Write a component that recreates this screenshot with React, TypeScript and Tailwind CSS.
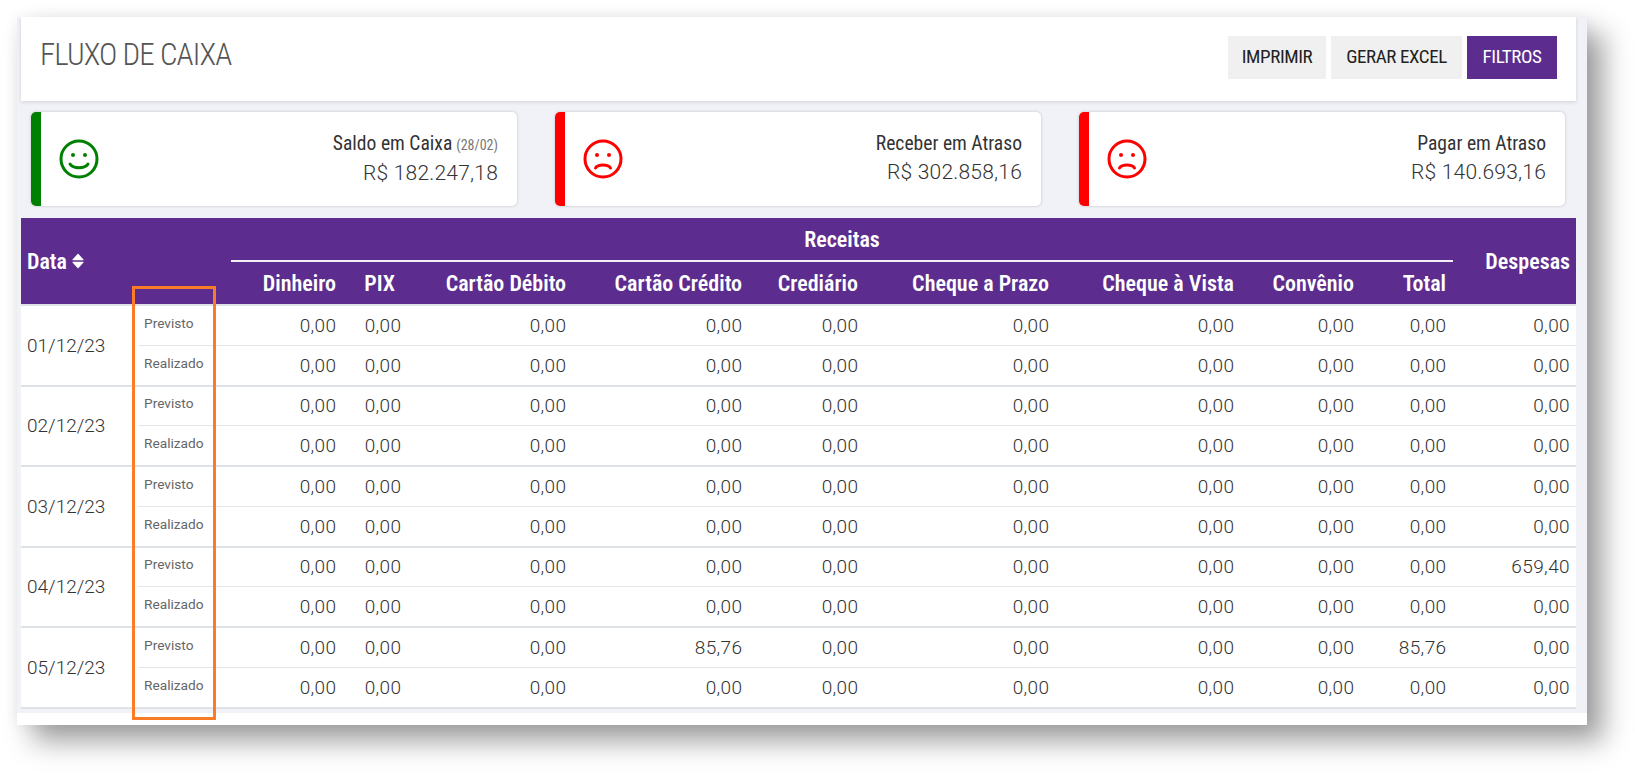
const colHeads = [
  "Dinheiro",
  "PIX",
  "Cartão Débito",
  "Cartão Crédito",
  "Crediário",
  "Cheque a Prazo",
  "Cheque à Vista",
  "Convênio",
  "Total",
];

const zero = ["0,00", "0,00", "0,00", "0,00", "0,00", "0,00", "0,00", "0,00", "0,00", "0,00"];

const days = [
  { date: "01/12/23", previsto: zero, realizado: zero },
  { date: "02/12/23", previsto: zero, realizado: zero },
  { date: "03/12/23", previsto: zero, realizado: zero },
  {
    date: "04/12/23",
    previsto: ["0,00", "0,00", "0,00", "0,00", "0,00", "0,00", "0,00", "0,00", "0,00", "659,40"],
    realizado: zero,
  },
  {
    date: "05/12/23",
    previsto: ["0,00", "0,00", "0,00", "85,76", "0,00", "0,00", "0,00", "0,00", "85,76", "0,00"],
    realizado: zero,
  },
];

const cards = [
  { label: "Saldo em Caixa", note: "(28/02)", value: "R$ 182.247,18", good: true },
  { label: "Receber em Atraso", note: "", value: "R$ 302.858,16", good: false },
  { label: "Pagar em Atraso", note: "", value: "R$ 140.693,16", good: false },
];

function Face({ good }: { good: boolean }) {
  const color = good ? "#008000" : "#ff0000";
  return (
    <svg width="40" height="42" viewBox="0 0 40 42" fill="none">
      <circle cx="20" cy="21" r="18" stroke={color} strokeWidth="3" />
      <circle cx="14" cy="17" r="2" fill={color} />
      <circle cx="26" cy="17" r="2" fill={color} />
      {good ? (
        <path d="M11 26 C14 31 26 31 29 26" stroke={color} strokeWidth="3" strokeLinecap="round" />
      ) : (
        <path d="M12.5 30 C15 26 25 26 27.5 30" stroke={color} strokeWidth="3" strokeLinecap="round" />
      )}
    </svg>
  );
}

function SortIcon() {
  return (
    <svg width="12" height="16" viewBox="0 0 12 16" fill="white">
      <path d="M6 0.5 L11.5 6.5 a0.5 0.5 0 0 1 -0.4 0.8 H0.9 a0.5 0.5 0 0 1 -0.4 -0.8 Z" />
      <path d="M6 15.5 L11.5 9.5 a0.5 0.5 0 0 0 -0.4 -0.8 H0.9 a0.5 0.5 0 0 0 -0.4 0.8 Z" />
    </svg>
  );
}

function ValueCells({ values, thick }: { values: string[]; thick: boolean }) {
  return (
    <>
      {values.map((v, i) => (
        <td
          key={i}
          className={
            thick
              ? "border-b-2 border-[#dee2e6] pr-[6.5px] pt-[1px] text-right text-[19px] font-light tracking-[0.4px] text-[#333] last:pr-[6px]"
              : "border-b border-[#e4e6e9] pr-[6.5px] pt-[1px] text-right text-[19px] font-light tracking-[0.4px] text-[#333] last:pr-[6px]"
          }
        >
          {v}
        </td>
      ))}
    </>
  );
}

export default function App() {
  return (
    <div className="h-[774px] w-[1635px] overflow-hidden bg-white pl-[17px] pt-[17px] font-[Roboto,sans-serif]">
      <div className="relative h-[708px] w-[1570px] bg-white shadow-[16px_16px_26px_rgba(0,0,0,0.38),0_0_14px_rgba(0,0,0,0.06)]">
        <div className="h-[696px] overflow-hidden bg-[#f0f2f7] pl-[4px] pr-[11px]">
          <div className="flex h-[84px] items-center justify-between bg-white pl-[19px] pr-[19px] shadow-[0_1px_4px_rgba(0,0,0,0.14)]">
            <h1 className="-mt-[8px] text-[31px] font-light tracking-[-0.9px] text-[#555] [font-stretch:75%]">
              FLUXO DE CAIXA
            </h1>
            <div className="-mt-[4px] flex gap-[5px] text-[19px] tracking-[-0.4px] [font-stretch:75%]">
              <button className="h-[43px] w-[98px] bg-[#f0f0f0] text-[#222]">IMPRIMIR</button>
              <button className="h-[43px] w-[131px] bg-[#f0f0f0] text-[#222]">GERAR EXCEL</button>
              <button className="h-[43px] w-[90px] bg-[#5c2d8e] text-white">FILTROS</button>
            </div>
          </div>

          <div className="ml-[10px] mr-[11px] mt-[11px] grid h-[94px] grid-cols-3 gap-[38px]">
            {cards.map((c) => (
              <div
                key={c.label}
                className="flex items-center overflow-hidden rounded-[5px] bg-white shadow-[0_0_3px_rgba(0,0,0,0.22)]"
              >
                <div className={c.good ? "h-full w-[10px] bg-[#008000]" : "h-full w-[10px] bg-[#ff0000]"} />
                <div className="ml-[18px]">
                  <Face good={c.good} />
                </div>
                <div className="mb-[2px] ml-auto pr-[19px] text-right text-[#333]">
                  <div className="text-[19.6px] leading-[28px] [font-stretch:75%]">
                    {c.label}
                    {c.note && <span className="ml-[4px] text-[14px] text-[#777]">{c.note}</span>}
                  </div>
                  <div className="text-[21px] font-light leading-[28px] tracking-[0.2px]">{c.value}</div>
                </div>
              </div>
            ))}
          </div>

          <table className="mt-[12px] w-[1555px] table-fixed border-separate border-spacing-0 bg-white">
            <colgroup>
              <col className="w-[117px]" />
              <col className="w-[93px]" />
              <col className="w-[112px]" />
              <col className="w-[65px]" />
              <col className="w-[165px]" />
              <col className="w-[176px]" />
              <col className="w-[116px]" />
              <col className="w-[191px]" />
              <col className="w-[185px]" />
              <col className="w-[120px]" />
              <col className="w-[92px]" />
              <col className="w-[123px]" />
            </colgroup>
            <thead className="bg-[#5c2d8e] text-[22px] text-white [font-stretch:75%]">
              <tr className="h-[44px]">
                <th rowSpan={2} className="border-b-2 border-[#dee2e6] pl-[6px] text-left font-semibold">
                  <span className="inline-flex items-center gap-[5px]">
                    Data <SortIcon />
                  </span>
                </th>
                <th rowSpan={2} className="border-b-2 border-[#dee2e6]" />
                <th colSpan={9} className="border-b-2 border-[#f2eff7] font-semibold">
                  Receitas
                </th>
                <th rowSpan={2} className="border-b-2 border-[#dee2e6] pr-[6px] text-right font-semibold">
                  Despesas
                </th>
              </tr>
              <tr className="h-[44px]">
                {colHeads.map((h) => (
                  <th
                    key={h}
                    className={
                      h === "PIX"
                        ? "border-b-2 border-[#dee2e6] pr-[13px] text-right font-semibold"
                        : "border-b-2 border-[#dee2e6] pr-[7px] text-right font-semibold"
                    }
                  >
                    {h}
                  </th>
                ))}
              </tr>
            </thead>
            <tbody>
              {days.map((d, i) => [
                <tr key={d.date + "p"} className={i % 2 === 1 ? "h-[39px]" : "h-[40px]"}>
                  <td
                    rowSpan={2}
                    className="border-b-2 border-[#dee2e6] pl-[6px] pt-[1px] text-[19px] font-light text-[#333]"
                  >
                    {d.date}
                  </td>
                  <td className="border-b border-[#e4e6e9] pb-[5px] pl-[6px] text-[13.7px] text-[#666]">Previsto</td>
                  <ValueCells values={d.previsto} thick={false} />
                </tr>,
                <tr key={d.date + "r"} className="h-[41px]">
                  <td className="border-b-2 border-[#dee2e6] pb-[5px] pl-[6px] text-[13.7px] text-[#666]">Realizado</td>
                  <ValueCells values={d.realizado} thick={true} />
                </tr>,
              ])}
            </tbody>
          </table>
        </div>

        {/* marcador laranja por cima da coluna */}
        <div className="absolute left-[115px] top-[269px] h-[434px] w-[84px] border-[3px] border-[#fb7c26]" />
      </div>
    </div>
  );
}
